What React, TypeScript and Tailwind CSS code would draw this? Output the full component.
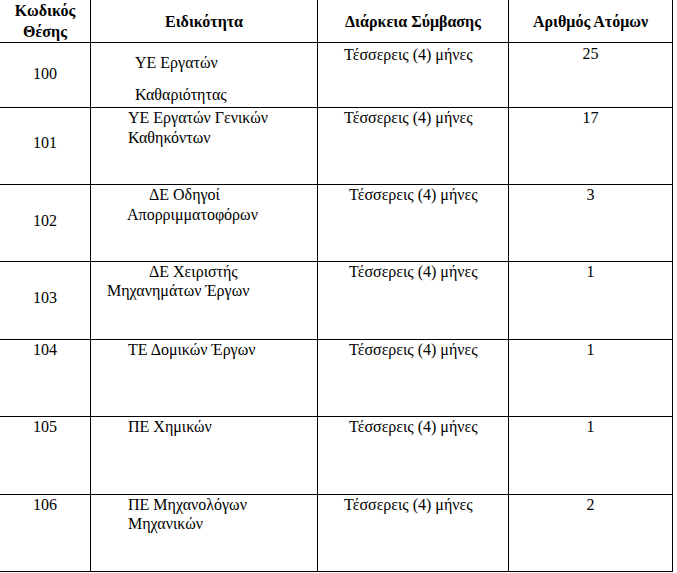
import React from 'react';

type Row = {
  code: string;
  codePad: string;
  height: string;
  spec: { text: string; pad: string }[];
  specClass: string;
  durationPad: string;
  count: string;
  countPad: string;
};

const rows: Row[] = [
  {
    code: '100',
    codePad: 'pt-[21px]',
    height: 'h-[65px]',
    spec: [
      { text: 'ΥΕ Εργατών', pad: 'pl-[44px]' },
      { text: 'Καθαριότητας', pad: 'pl-[44px]' },
    ],
    specClass: 'pt-[4px] leading-[32px]',
    durationPad: 'pt-[2px] pl-[26px]',
    count: '25',
    countPad: 'pt-[1px]',
  },
  {
    code: '101',
    codePad: 'pt-[25px]',
    height: 'h-[77px]',
    spec: [
      { text: 'ΥΕ Εργατών Γενικών', pad: 'pl-[37px]' },
      { text: 'Καθηκόντων', pad: 'pl-[37px]' },
    ],
    specClass: 'pt-0 leading-[20px]',
    durationPad: 'pt-0 pl-[26px]',
    count: '17',
    countPad: 'pt-0',
  },
  {
    code: '102',
    codePad: 'pt-[26px]',
    height: 'h-[77px]',
    spec: [
      { text: 'ΔΕ Οδηγοί', pad: 'pl-[58px]' },
      { text: 'Απορριμματοφόρων', pad: 'pl-[36px]' },
    ],
    specClass: 'pt-0 leading-[20px]',
    durationPad: 'pt-0 pl-[31px]',
    count: '3',
    countPad: 'pt-0',
  },
  {
    code: '103',
    codePad: 'pt-[26px]',
    height: 'h-[78px]',
    spec: [
      { text: 'ΔΕ Χειριστής', pad: 'pl-[58px]' },
      { text: 'Μηχανημάτων Έργων', pad: 'pl-[16px]' },
    ],
    specClass: 'pt-0 leading-[19px]',
    durationPad: 'pt-0 pl-[31px]',
    count: '1',
    countPad: 'pt-0',
  },
  {
    code: '104',
    codePad: 'pt-0',
    height: 'h-[77px]',
    spec: [{ text: 'ΤΕ Δομικών Έργων', pad: 'pl-[37px]' }],
    specClass: 'pt-0 leading-[19px]',
    durationPad: 'pt-0 pl-[31px]',
    count: '1',
    countPad: 'pt-0',
  },
  {
    code: '105',
    codePad: 'pt-0',
    height: 'h-[78px]',
    spec: [{ text: 'ΠΕ Χημικών', pad: 'pl-[37px]' }],
    specClass: 'pt-0 leading-[19px]',
    durationPad: 'pt-0 pl-[31px]',
    count: '1',
    countPad: 'pt-0',
  },
  {
    code: '106',
    codePad: 'pt-0',
    height: 'h-[77px]',
    spec: [
      { text: 'ΠΕ Μηχανολόγων', pad: 'pl-[37px]' },
      { text: 'Μηχανικών', pad: 'pl-[37px]' },
    ],
    specClass: 'pt-0 leading-[19px]',
    durationPad: 'pt-0 pl-[26px]',
    count: '2',
    countPad: 'pt-0',
  },
];

const cols = 'grid grid-cols-[91px_227px_191px_164px]';

const App: React.FC = () => {
  return (
    <div className="w-[677px] h-[573px] bg-white text-black text-[16px] leading-[19px] font-[family-name:'Liberation_Serif',serif] overflow-hidden">
      <div className="w-[673px]">
        {/* Header */}
        <div className={`${cols} h-[43px] border-b border-black font-bold`}>
          <div className="border-r border-black text-center leading-[21px]">
            <div>Κωδικός</div>
            <div>Θέσης</div>
          </div>
          <div className="border-r border-black flex items-center justify-center">Ειδικότητα</div>
          <div className="border-r border-black flex items-center justify-center">Διάρκεια Σύμβασης</div>
          <div className="border-r border-black flex items-center justify-center">Αριθμός Ατόμων</div>
        </div>

        {/* Body */}
        {rows.map((row) => (
          <div key={row.code} className={`${cols} ${row.height} border-b border-black`}>
            <div className={`border-r border-black text-center ${row.codePad}`}>{row.code}</div>
            <div className={`border-r border-black ${row.specClass}`}>
              {row.spec.map((line) => (
                <div key={line.text} className={`${line.pad} whitespace-nowrap`}>
                  {line.text}
                </div>
              ))}
            </div>
            <div className={`border-r border-black whitespace-nowrap ${row.durationPad}`}>
              Τέσσερεις (4) μήνες
            </div>
            <div className={`border-r border-black text-center ${row.countPad}`}>{row.count}</div>
          </div>
        ))}
      </div>
    </div>
  );
};

export default App;
